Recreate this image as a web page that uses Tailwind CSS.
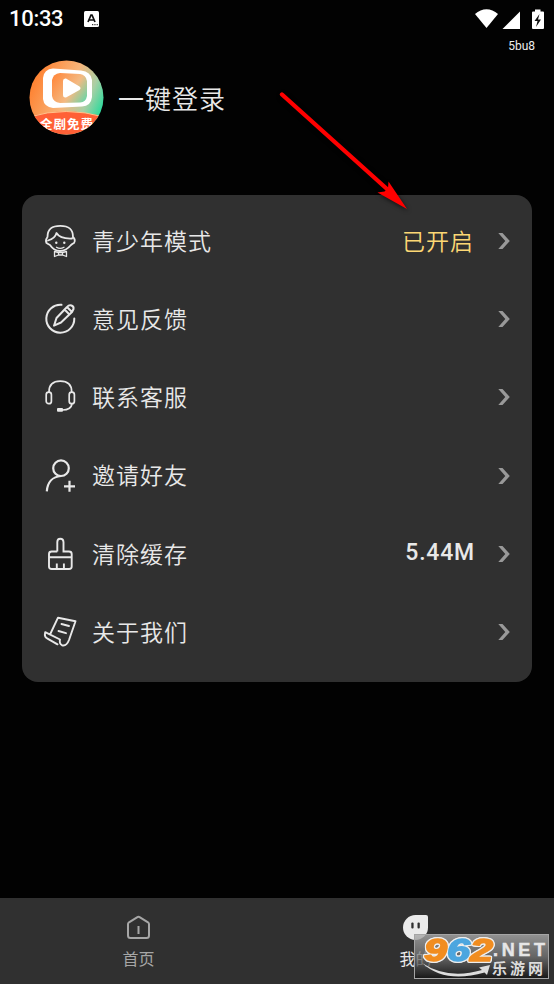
<!DOCTYPE html>
<html lang="zh-CN">
<head>
<meta charset="utf-8">
<title>我的</title>
<script src="https://cdn.jsdelivr.net/npm/@tailwindcss/browser@4"></script>
</head>
<body class="bg-black">
<div class="relative flex h-[984px] w-[554px] flex-col overflow-hidden bg-[#020202] font-['Noto_Sans_CJK_SC',sans-serif] text-[#e8e8e8]">
  <header class="flex h-[38px] shrink-0 items-center pl-[9px] pr-[9px] text-white">
    <span class="w-[55px] font-[Roboto,sans-serif] text-[22px] font-medium leading-[38px] tracking-[-0.3px]">10:33</span>
    <svg class="ml-5 mt-[-1px]" width="15" height="16" viewBox="0 0 15 16"><rect width="15" height="16" rx="1.5" fill="#fff"/><path d="M4 11 7 4h1l3 7M5.3 9h4.5" fill="none" stroke="#111" stroke-width="1.7"/><path d="M8 13.7h6" stroke="#111" stroke-dasharray="1.3 1"/></svg>
    <svg class="ml-auto" width="70" height="22" viewBox="0 0 70 22" fill="#fff"><path d="M0 6C7-.3 16-.3 23 6L11.500 20Z"/><path d="M45 3.500v17.500H27.500Z"/><path d="M60 1.500h5.500v2H68q1 0 1 1V20q0 1-1 1H58q-1 0-1-1V4.500q0-1 1-1h2Z"/><path d="M64.500 6 59.500 13h3l-1.500 6 5-7.500h-3Z" fill="#111"/></svg>
  </header>
  <div class="h-4 shrink-0 pr-[19px] text-right font-[Roboto,sans-serif] text-[12px] leading-4 text-[#eee]">5bu8</div>

  <section class="flex h-[141px] shrink-0 items-start pl-[29px] pt-[6px]">
    <svg width="75" height="75" viewBox="0 0 75 75">
      <defs>
        <clipPath id="avatar"><circle cx="37.500" cy="37.500" r="37"/></clipPath>
        <linearGradient id="warm" x1="0" y1=".25" x2="1" y2=".7"><stop offset=".05" stop-color="#ff8130"/><stop offset=".5" stop-color="#f7b57a"/><stop offset=".76" stop-color="#a9cfa5"/><stop offset="1" stop-color="#17dc9b"/></linearGradient>
        <linearGradient id="screen" x1="0" y1=".2" x2="1" y2=".8"><stop stop-color="#ff8a3f"/><stop offset=".6" stop-color="#f3ba83"/><stop offset="1" stop-color="#74d3a4"/></linearGradient>
      </defs>
      <g clip-path="url(#avatar)">
        <rect width="75" height="75" fill="url(#warm)"/>
        <path d="M24 8.500 52 10.500Q62 11.500 63 20V37Q62 46 53 46.500L24 48Q15 47 14 39V18Q15 9 24 8.500Z" fill="#fff"/>
        <path d="M31 13 51 14Q57 15 58 21V36Q57 42 51 42.500L31 43Q24 42 23 36V20Q24 14 31 13Z" fill="url(#screen)"/>
        <path d="M37 18.500Q34 18 34 21V35Q34 38 37 37.500L50.500 30Q52.500 28 50.500 26.500Z" fill="#fff"/>
        <path d="M0 57Q37 46 75 57V75H0Z" fill="#ff6036" stroke="#ffc18b" stroke-width="1"/>
        <text x="37.500" y="68.500" text-anchor="middle" fill="#fff" font-family="Noto Sans CJK SC" font-size="12.500" font-weight="700" textLength="53">全剧免费</text>
      </g>
    </svg>
    <h1 class="ml-[14px] text-[26px] leading-[76px] tracking-[1px] font-[350]">一键登录</h1>
  </section>

  <main class="mx-[22px] flex h-[487px] shrink-0 flex-col rounded-2xl bg-[#303030] pt-[7px] text-[23px] font-[350] leading-[34px] tracking-[1px]">
    <div class="flex h-[78.2px] items-center pl-5 pr-[22px]">
      <svg width="36" height="36" viewBox="0 0 36 36" fill="none" stroke="#e8e8e8" stroke-width="1.800" stroke-linejoin="round" stroke-linecap="round"><path d="M5.500 14C5.500 6 10 2.800 18.300 2.800S31 6 31 14Q34 17 32 20 30 21 29 22 24 28 18 28T8 22Q6 21 4.500 20 3 17 5.500 14M6 17.500C11 16 13.500 14 14.500 10Q18 16 30 15.500"/><path d="M14.500 24.300Q18 26.500 22 24.300" stroke-width="1.300"/><g fill="#e8e8e8" stroke="none"><circle cx="14.300" cy="19.700" r="1.200"/><circle cx="22.300" cy="19.700" r="1.200"/></g><path d="M12.500 28.500v5l4-1.500h4l4 1.500v-5l-4 1h-4ZM16.500 29.500v2.500M20.500 29.500v2.500" stroke-width="1.300"/></svg>
      <span class="-mt-[3px] ml-[14px]">青少年模式</span><span class="-mt-[3px] ml-auto mr-[24px] text-[#fcd774]">已开启</span>
      <svg width="12" height="18" viewBox="0 0 12 18" fill="#999"><path d="M.3 1H4.500l7.300 8L4.500 17H.3L7.300 9Z"/></svg>
    </div>
    <div class="flex h-[78.2px] items-center pl-5 pr-[22px]">
      <svg width="36" height="36" viewBox="0 0 36 36" fill="none" stroke="#e8e8e8" stroke-width="2" stroke-linejoin="round" stroke-linecap="round"><path d="M19.500 3.800A14 14 0 1 0 32.300 17.500"/><path d="M12 24.700 14.500 17 25 6l5 5L19 21.500ZM22.500 8.500l5 5M25 6q2-2.500 4.500-1.500t2 3.500L30 11"/></svg>
      <span class="-mt-[3px] ml-[14px]">意见反馈</span>
      <svg class="ml-auto" width="12" height="18" viewBox="0 0 12 18" fill="#999"><path d="M.3 1H4.500l7.300 8L4.500 17H.3L7.300 9Z"/></svg>
    </div>
    <div class="flex h-[78.2px] items-center pl-5 pr-[22px]">
      <svg width="36" height="36" viewBox="0 0 36 36" fill="none" stroke="#e8e8e8" stroke-width="1.700"><path d="M7 13C7 6 11 2.200 18.300 2.200S29.700 6 29.700 13M30 25Q29 31 20.500 31"/><rect x="4.200" y="13.200" width="5.200" height="11.500" rx="2.500"/><rect x="27.200" y="13.200" width="5.200" height="11.500" rx="2.500"/><rect x="15" y="29" width="6" height="3.700" rx="1" fill="#e8e8e8" stroke="none"/></svg>
      <span class="-mt-[3px] ml-[14px]">联系客服</span>
      <svg class="ml-auto" width="12" height="18" viewBox="0 0 12 18" fill="#999"><path d="M.3 1H4.500l7.300 8L4.500 17H.3L7.300 9Z"/></svg>
    </div>
    <div class="flex h-[78.2px] items-center pl-5 pr-[22px]">
      <svg width="36" height="36" viewBox="0 0 36 36" fill="none" stroke="#e8e8e8" stroke-width="2.200"><circle cx="19" cy="10.200" r="7.800"/><path d="M4.800 33.300C5.500 24.500 10.500 18.500 19 18M22 28.300h11M27.500 22.800v11"/></svg>
      <span class="-mt-[3px] ml-[14px]">邀请好友</span>
      <svg class="ml-auto" width="12" height="18" viewBox="0 0 12 18" fill="#999"><path d="M.3 1H4.500l7.300 8L4.500 17H.3L7.300 9Z"/></svg>
    </div>
    <div class="flex h-[78.2px] items-center pl-5 pr-[22px]">
      <svg width="36" height="36" viewBox="0 0 36 36" fill="none" stroke="#e8e8e8" stroke-width="1.900"><path d="M15.300 15.500V6Q15.300 2.700 18.300 2.700T21.500 6v9.500H27Q29.700 15.500 29.700 18V30.500Q29.700 33 27 33H9.700Q7 33 7 30.500V18Q7 15.500 9.700 15.500H15.300M7 21.300H29.700M14.800 27.500V33M21.900 27.500V33"/></svg>
      <span class="-mt-[2px] ml-[14px]">清除缓存</span><span class="-mt-[2px] ml-auto mr-[23px] font-[Roboto,sans-serif] text-[23px] font-medium tracking-[0.8px]">5.44M</span>
      <svg width="12" height="18" viewBox="0 0 12 18" fill="#999"><path d="M.3 1H4.500l7.300 8L4.500 17H.3L7.300 9Z"/></svg>
    </div>
    <div class="flex h-[78.2px] items-center pl-5 pr-[22px]">
      <svg width="36" height="36" viewBox="0 0 36 36" fill="none" stroke="#e8e8e8" stroke-width="1.900" stroke-linejoin="round" stroke-linecap="round"><path d="M8.500 19.500 16 3.700 33.500 7.200 27 26Q24.500 32.500 20 31.300 17 29.500 18 25.500L3.200 18.200Q2 23 5.500 24.700L15.500 30.300M19.500 10l7.500 2M16.500 17l7.500 2.200"/></svg>
      <span class="-mt-[2px] ml-[14px]">关于我们</span>
      <svg class="ml-auto" width="12" height="18" viewBox="0 0 12 18" fill="#999"><path d="M.3 1H4.500l7.300 8L4.500 17H.3L7.300 9Z"/></svg>
    </div>
  </main>

  <nav class="mt-auto grid h-[86px] shrink-0 grid-cols-2 bg-[#303030] text-[16px] leading-6">
    <div class="flex flex-col items-center pt-[16px] text-[#a6a6a6]">
      <svg width="26" height="28" viewBox="0 0 26 28" fill="none" stroke="currentColor" stroke-width="2"><path d="M2 10Q2 9 3 8.300L11 3.300Q12.500 2.400 14 3.300L22 8.300Q23 9 23 10V21.500Q23 24 20.500 24H4.500Q2 24 2 21.500ZM12.500 12v8"/></svg>
      <span class="mt-1">首页</span>
    </div>
    <div class="flex flex-col items-center pt-[16px]">
      <svg width="26" height="28" viewBox="0 0 26 28"><path d="M12.500 1H23Q25 1 25 3V13.500A12.500 12.500 0 1 1 12.500 1Z" fill="#ebebeb"/><rect x="8.300" y="8.500" width="2.300" height="6" rx="1" fill="#303030"/><rect x="14.500" y="8.500" width="2.300" height="6" rx="1" fill="#303030"/></svg>
      <span class="mt-1">我的</span>
    </div>
  </nav>

  <svg class="absolute left-[414px] top-[934px] overflow-visible" width="136" height="46" viewBox="0 0 136 46">
    <defs><linearGradient id="plate" x1="0" y1="0" x2="0" y2="1"><stop stop-color="#aaa" stop-opacity=".8"/><stop offset=".5" stop-color="#777" stop-opacity=".75"/><stop offset="1" stop-color="#111" stop-opacity=".8"/></linearGradient></defs>
    <rect x=".5" y=".5" width="134" height="44" fill="url(#plate)" stroke="#a5a5a5"/>
    <path d="M8 29Q34 46 68 36L65 33.500 76 31 73 41 70.500 38.500Q31 50 8 29Z" fill="#ddd"/>
    <text class="[filter:drop-shadow(1px_0_0_#eee)_drop-shadow(-1px_0_0_#eee)_drop-shadow(0_1px_0_#eee)_drop-shadow(0_-1px_0_#eee)]" x="10" y="26.500" font-family="Liberation Sans" font-size="31" font-weight="700" font-style="italic" textLength="69" lengthAdjust="spacingAndGlyphs" stroke-width="1.600" stroke-linejoin="round"><tspan fill="#f18d20" stroke="#f18d20">9</tspan><tspan fill="#4ca6df" stroke="#4ca6df">6</tspan><tspan fill="#f18d20" stroke="#f18d20">2</tspan></text>
    <text x="79" y="21.500" font-family="Liberation Sans" font-size="18" font-weight="700" fill="#e6e6e6" stroke="#e6e6e6" stroke-width=".5" textLength="52">.NET</text>
    <text x="78" y="39.500" font-family="Noto Sans CJK SC" font-size="15" font-weight="700" fill="#ddd" textLength="51">乐游网</text>
  </svg>
  <svg class="absolute left-[270px] top-[80px] drop-shadow-[1px_2px_2px_rgba(0,0,0,0.6)]" width="150" height="140" viewBox="0 0 150 140"><path d="M12 14.500 117 109" stroke="#f00" stroke-width="4.300" stroke-linecap="round"/><path d="M137 129 107.500 112.500 114.500 111.500 118 108 118.500 101.500Z" fill="#f00"/></svg>
</div>
</body>
</html>
